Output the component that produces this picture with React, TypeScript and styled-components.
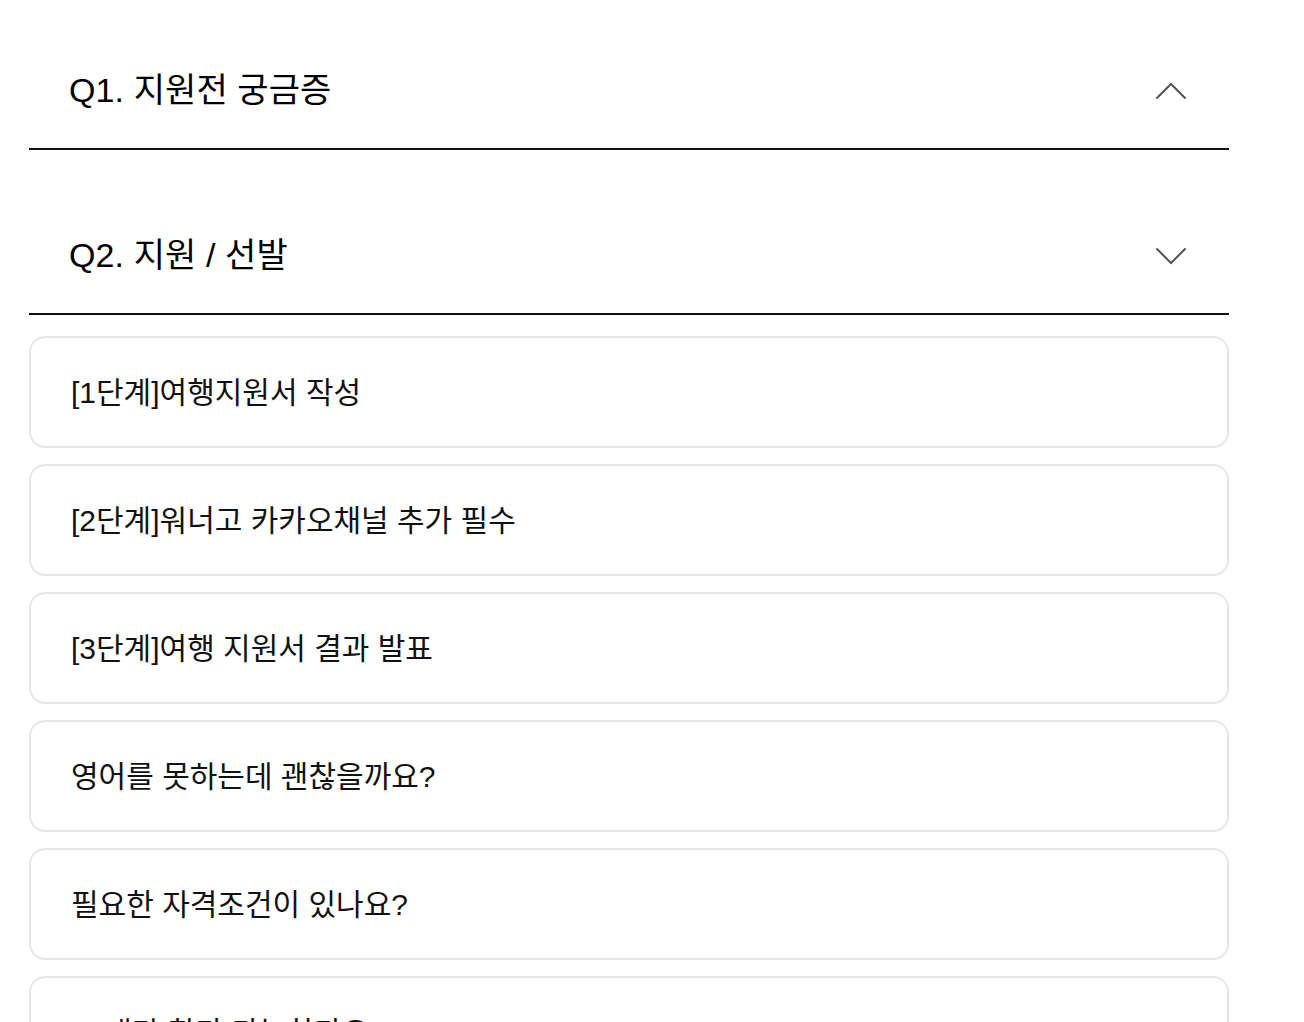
import React from "react";
import styled, { createGlobalStyle } from "styled-components";

const Global = createGlobalStyle`
  html, body { margin: 0; padding: 0; background: #fff; }
  body { font-family: "Liberation Sans", Arial, "Noto Sans CJK KR", sans-serif; color: #111; }
`;

const Page = styled.div`
  width: 1200px;
  margin-left: 29px;
  padding-top: 30px;
  padding-bottom: 40px;
  display: flex;
  flex-direction: column;
`;

const Section = styled.section<{ $first?: boolean }>`
  margin-top: ${(p) => (p.$first ? "0" : "45px")};
`;

const Header = styled.div`
  height: 118px;
  border-bottom: 2px solid #111;
  display: flex;
  align-items: center;
  justify-content: space-between;
  padding: 0 43px 0 40px;
  cursor: pointer;
`;

const Title = styled.h2`
  margin: 0 0 4px;
  font-size: 34px;
  font-weight: 400;
  color: #000;
  letter-spacing: 0.1px;
`;

const ChevronBox = styled.span`
  display: flex;
  margin-top: 4px;
`;

const List = styled.div`
  margin-top: 21px;
  display: flex;
  flex-direction: column;
  gap: 16px;
`;

const Card = styled.div`
  height: 112px;
  box-sizing: border-box;
  border: 2px solid #e6e6e6;
  border-radius: 16px;
  display: flex;
  align-items: center;
  padding: 0 40px 5px;
  font-size: 30px;
  color: #111;
`;

const Chevron = ({ up }: { up?: boolean }) => (
  <ChevronBox>
    <svg width="30" height="18" viewBox="0 0 30 18" fill="none">
      <path
        d={up ? "M1 16 L15 2 L29 16" : "M1 2 L15 16 L29 2"}
        stroke="#555"
        strokeWidth="2"
        strokeLinecap="round"
        strokeLinejoin="miter"
      />
    </svg>
  </ChevronBox>
);

const items = [
  "[1단계]여행지원서 작성",
  "[2단계]워너고 카카오채널 추가 필수",
  "[3단계]여행 지원서 결과 발표",
  "영어를 못하는데 괜찮을까요?",
  "필요한 자격조건이 있나요?",
  "30대만 참가 가능한가요?",
];

export default function App() {
  return (
    <>
      <Global />
      <Page>
        <Section $first>
          <Header>
            <Title>Q1. 지원전 궁금증</Title>
            <Chevron up />
          </Header>
        </Section>
        <Section>
          <Header>
            <Title>Q2. 지원 / 선발</Title>
            <Chevron />
          </Header>
          <List>
            {items.map((t) => (
              <Card key={t}>{t}</Card>
            ))}
          </List>
        </Section>
      </Page>
    </>
  );
}
